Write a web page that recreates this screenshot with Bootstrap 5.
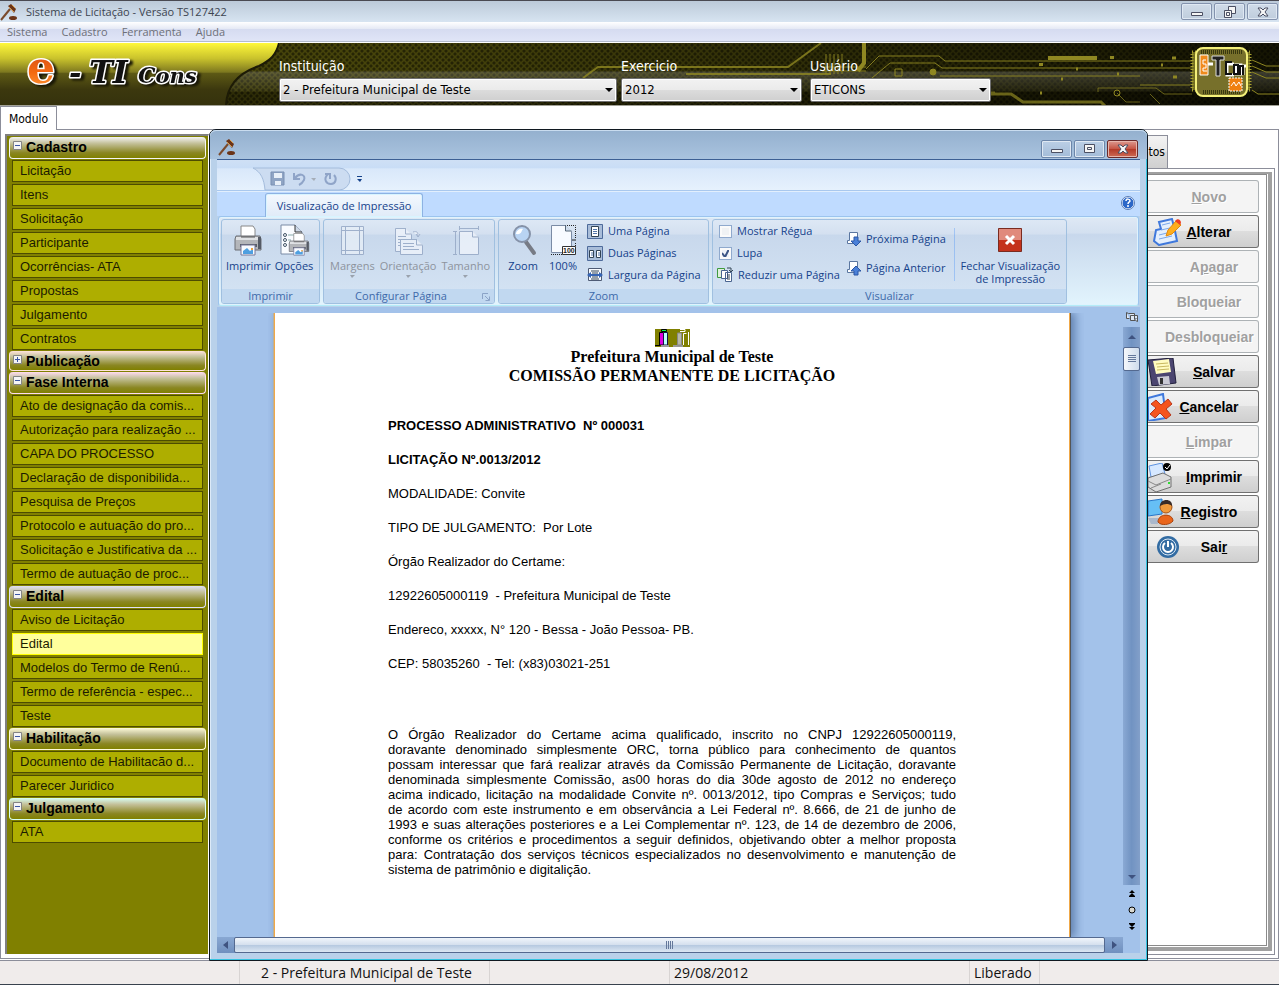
<!DOCTYPE html>
<html lang="pt-BR">
<head>
<meta charset="utf-8">
<meta name="viewport" content="width=device-width, initial-scale=1">
<title>Sistema de Licitação</title>
<link rel="stylesheet" href="https://cdn.jsdelivr.net/npm/bootstrap@5.3.0/dist/css/bootstrap.min.css">
<style>
:root{--ui:"Open Sans","Noto Sans",sans-serif;--tahoma:"DejaVu Sans Condensed","DejaVu Sans",sans-serif;--sans:"Liberation Sans",Arial,sans-serif}
body{font-family:var(--ui);font-size:11px;line-height:16px;color:#000;background:#fff}
button{font-family:inherit;padding:0;border:0;background:none;color:inherit}
svg{display:block;flex:none}
.app{min-height:100vh}
/* application frame */
.app-title{height:22px;border-top:1px solid #4a4a52;background:linear-gradient(#bccad9,#d7e4f1);padding:0 1px 0 0;color:#3c4450}
.win-btn{width:31px;height:17px;border:1px solid #8392ad;border-radius:2px;background:linear-gradient(#d0dbe8,#bfcddd);display:flex;align-items:center;justify-content:center;box-shadow:inset 0 0 0 1px #dfe8f3}
.win-btns{display:flex;gap:2px}
.app-menu{height:20px;background:linear-gradient(#fff,#e6eaf5 35%,#d5dbf0 36%,#e0e5f7);border-bottom:1px solid #b4bccd;gap:14px;padding-left:7px}
.app-menu a{color:#6e7078;text-decoration:none;line-height:20px}
/* banner */
.banner{height:63px;margin-top:1px;border-bottom:1px solid #a3a297;background:
 linear-gradient(rgba(0,0,0,0) 28px,rgba(150,150,140,.32) 29px,rgba(60,60,50,.22) 48px,rgba(0,0,0,.35) 49px),
 linear-gradient(90deg,rgba(0,0,0,0) 30%,rgba(0,0,0,.7) 100%),
 radial-gradient(circle at 2px 2px,#26250500 0,#262505 0,#262505 1px,transparent 2px) 0 0/6px 6px,
 radial-gradient(circle at 2px 2px,#262505 0,#262505 1px,transparent 2px) 3px 3px/6px 6px,#46440b}
.logo-text{filter:drop-shadow(3px 2px 1px #1a1806)}
.banner-field{z-index:1;padding-top:15px}
.banner-field label{color:#fff;font:14px/16px var(--tahoma);display:block}
.banner-field .form-select{font:13px/20px var(--tahoma);height:24px;padding:0 20px 0 3px;border:1px solid #707070;border-radius:2px;color:#000;box-shadow:inset 0 0 0 1px #fff;
 background:url("data:image/svg+xml,%3Csvg xmlns='http://www.w3.org/2000/svg' width='8' height='4'%3E%3Cpath d='M0 0h8L4 4z'/%3E%3C/svg%3E") no-repeat right 3px center/8px 4px,linear-gradient(#f2f2f2,#ebebeb 48%,#dcdcdc 50%,#cfcfcf)}
/* module tab and main area */
.module-tab{font:12px/22px var(--tahoma);width:57px;height:24px;border:1px solid #8c8e9a;border-bottom:0;background:#fff;position:relative;z-index:1}
.tab-strip{height:23px}
.main-area{border:1px solid #8c8e9a;border-right:0}
.side-wrap{width:208px;padding:4px 0 4px 4px}
.side-box{background:#808000;border:solid #808080;border-width:2px 0 0 2px;border-right:1px solid #fff;padding:1px 2px 0;min-width:0}
.side-head{height:22px;display:flex;width:100%;border:1px solid var(--edge,#fff);border-top:0;border-radius:4px;background:linear-gradient(var(--edge,#f4f4ec),#c4c19a 30%,#8a8622 75%,#808000);font:bold 14px/21px var(--sans);margin-bottom:1px;padding-left:3px;gap:4px}
.side-head svg{margin-top:4px}
.side-head.closed{height:20px;line-height:20px}
.side-list{list-style:none;margin:0 3px 1px;padding:0;display:flex;flex-direction:column;gap:2px}
.side-list a{display:block;height:22px;border:1px solid #4d4c00;background:#aeae00;font:13px/20px var(--sans);color:#1c1c00;text-decoration:none;padding-left:7px;white-space:nowrap;overflow:hidden}
.side-list a.active{background:#ffff9c;border-color:#ff0}
/* print preview window */
.preview{margin:-1px 0 -3px;border:1px solid #101820;border-radius:7px 7px 0 0;background:#b9d1ea;padding:0 7px 7px;box-shadow:inset -1px 0 #35c3e0,inset 0 -1px #35c3e0,inset 1px 0 #dceaf8;position:relative;z-index:2;min-width:0}
.preview-bar{height:29px;margin:0 -7px;padding:0 9px 0 8px;border-radius:6px 6px 0 0;background:linear-gradient(#94b0ce,#a9c3df);box-shadow:inset 0 1px #c9dcef}
.preview-bar .win-btn{height:18px;background:linear-gradient(#bccfe6,#a4bcd8);border-color:#6c86aa}
.preview-bar .win-btn.shut{background:linear-gradient(#dd9a90,#c65443 50%,#b43a28 52%,#cd6b55);border-color:#6b2a2a;box-shadow:inset 0 0 0 1px #e6b5ab}
.quick{height:32px;border-top:1px solid #3c5f94;background:linear-gradient(#cfe0f5,#c9ddf6 25%,#d9e8fa 30%,#e6f1fd);border-bottom:1px solid #a9c8ee;padding:7px 0 0 36px}
.ribbon-tabs{height:25px;background:#bfdbff;padding-left:48px;padding-right:5px;border-top:1px solid #e2effd}
.ribbon-tab{height:24px;margin-top:1px;width:158px;border:1px solid #8db2e3;border-bottom:0;border-radius:3px 3px 0 0;background:linear-gradient(#f3f8fe,#e0ebf8);box-shadow:inset 0 0 0 1px #d8f4ff;color:#15428b;line-height:21px;position:relative;z-index:1}
.ribbon{height:90px;border:1px solid #9cc4ee;border-radius:3px;margin:0 1px 1px;background:linear-gradient(#dfe9f5,#d3e0f0 18%,#c8d8ec 20%,#e2f4fd);border-bottom-color:#b4ecf8;box-shadow:inset 0 0 0 1px #dff3fd;padding:2px;gap:3px;color:#15428b}
.rgroup{border:1px solid #a0c0e0;border-radius:3px;height:85px;background:linear-gradient(#dde8f5,#d4e0f0 17%,#c8d8ec 18%,#d5e4f4);overflow:hidden}
.rgroup .caption-bar{height:14px;background:#c1d8f0;color:#3e6aaa;text-align:center;line-height:14px;position:relative}
.rbtn{display:flex;flex-direction:column;align-items:center;line-height:13px;gap:3px}
.rbtn:disabled{color:#8d939d}
.rbtn:disabled svg{opacity:.8}
.rbtn.wide-btn{gap:7px}
.setup-row{padding-left:6px;gap:5px}
.page-moves{padding-top:8px;gap:7px}
.rline{display:flex;align-items:center;gap:5px;height:22px;line-height:16px;white-space:nowrap}
.rline .form-check-input{width:13px;height:13px;margin:0 0 0 2px;border:1px solid #8fa9cd;border-radius:0;background-color:#f0f2f4;box-shadow:inset 0 0 0 2px #fafafa}
.rline .form-check-input:checked{background:#eef2f8 url("data:image/svg+xml,%3Csvg xmlns='http://www.w3.org/2000/svg' viewBox='0 0 11 11'%3E%3Cpath d='M2 5l3 4 4-8' fill='none' stroke='%233c5585' stroke-width='2'/%3E%3C/svg%3E") center/11px 11px no-repeat}
.desk{background:#a3c2ea}
.canvas{padding:6px 53px 0 57px}
.sheet{background:#fff;border:solid #f0a848;border-width:0 1px;box-shadow:1px 0 #555,-1px 0 #b8b0a0,4px 0 9px 1px #5f7fae;clip-path:inset(0 -14px 0 -6px);padding:15px 113px 0;font:13px/16px var(--sans)}
.sheet h1{font:bold 16px/19px "Liberation Serif",serif;margin:0;text-align:center}
.sheet .fields{padding-top:33px}
.sheet p{margin:0 0 18px;white-space:pre}
.sheet .terms{line-height:15px;margin-top:55px;white-space:normal}
.terms span{display:block;white-space:nowrap;text-align-last:justify}
.terms span:last-child{text-align-last:left}
.track{background:linear-gradient(90deg,#8aa9d4,#7193c2 50%,#829fc9)}
.hbar{height:16px;background:linear-gradient(#89a8d3,#7090be)}
.thumb{background:linear-gradient(#f0f5fb,#d5e0ee 48%,#b6c9e0 52%,#dce7f3);border:1px solid #54698f;border-radius:2px}
.vthumb{background:linear-gradient(90deg,#f4f7fb,#cfdcec);border:1px solid #54698f;border-radius:2px;height:24px}
/* right-hand command panel */
.cmd-wrap{width:131px;border-right:1px solid #8c8e9a;padding:5px 3px 3px 0}
.cmd-tab{width:20px;height:33px;border:1px solid #8c8e9a;border-width:1px 1px 0 0;background:linear-gradient(#f3f3f3,#e8e8e8 48%,#dcdcdc 50%,#d0d0d0);font:12px/33px var(--tahoma);text-align:right;padding-right:2px;display:block}
.cmd-page{border:1px solid #8c8e9a;border-left:0;padding:3px 2px 3px 0}
.cmd-box{border:solid #a0a0a0;border-width:2px 4px 4px 0;padding:0 1px 1px 0}
.cmd-in{border:1px solid #8a8a8a;border-left:0;padding-top:5px;gap:2px}
.cmd{height:33px;width:111px;border:1px solid #707070;border-left:0;border-radius:0 3px 3px 0;background:linear-gradient(#f2f2f2,#ebebeb 48%,#dddddd 50%,#cfcfcf);font:bold 14px/30px var(--sans);position:relative;overflow:hidden;white-space:nowrap;text-align:center;padding:1px 0 0 12px}
.cmd:disabled{background:#f4f4f4;border-color:#adb2b5;color:#a0a0a0;text-shadow:1px 1px #fff}
.cmd svg{position:absolute;left:0;top:2px}
.cmd .inset-ico{left:5px}
.cmd.shifted{padding-left:22px}
.cmd.spill{padding-left:17px;text-align:left}
/* status bar */
.status{height:25px;margin-top:1px;border-top:1px solid #8c8e9a;border-bottom:1px solid #39424e;background:#f0eceb;font-size:14px;line-height:24px;color:#111}
.status>div{border-right:1px solid #d8d4d3;padding-left:4px}
</style>
</head>
<body>
<svg width="0" height="0" class="position-absolute" aria-hidden="true">
<defs>
<symbol id="gavel" viewBox="0 0 18 18"><path d="M1 17L10 6" stroke="#7a4a2c" stroke-width="2"/><path d="M8 3l3-2 5 5-2 4z" fill="#6b3418"/><path d="M9 4l5 5M12 2l3 3" stroke="#d89a48" stroke-width="1"/><ellipse cx="13" cy="15" rx="4" ry="2" fill="#6b3418"/></symbol>
<symbol id="printer" viewBox="0 0 32 32"><path d="M9 2h12l2 3v8H9z" fill="#fff" stroke="#888"/><path d="M4 12h24l1 3v11H3V15z" fill="#b4b6ba" stroke="#6c6f75"/><path d="M4 13h24v3H4z" fill="#dfe1e4"/><path d="M9 13h14" stroke="#555"/><path d="M26 13h3v12h-3z" fill="#555b66"/><path d="M8 20h17v3H8z" fill="#5a6068"/><path d="M9 21h14v10H9z" fill="#f8fbff" stroke="#779"/><path d="M11 27l4-3 3 3 3-2v5H11z" fill="#4f9fe0"/><path d="M19 24h2v2h-2z" fill="#e8a040"/></symbol>
<symbol id="minus" viewBox="0 0 9 9"><path d="M.5.5h8v8h-8z" fill="#f4f4f4" stroke="#848484"/><path d="M2 4.500h5" stroke="#3a55a5"/></symbol>
<symbol id="plus" viewBox="0 0 9 9"><path d="M.5.5h8v8h-8z" fill="#f4f4f4" stroke="#848484"/><path d="M2 4.500h5M4.500 2v5" stroke="#3a55a5"/></symbol>
<symbol id="xmark" viewBox="0 0 12 10"><path d="M1 1h3l2 2 2-2h3L8 5l3 4H8L6 7 4 9H1l3-4z" fill="#f5f5f5" stroke="#4b4f63"/></symbol>
<symbol id="mini" viewBox="0 0 12 10"><path d="M.5 5.500h11v3H.5z" fill="#f5f5f5" stroke="#4b4f63"/></symbol>
</defs>
</svg>

<div class="app d-flex flex-column">
<header>
 <div class="app-title d-flex align-items-center">
  <svg width="18" height="18"><use href="#gavel"/></svg>
  <span class="ms-2 me-auto">Sistema de Licitação - Versão TS127422</span>
  <div class="win-btns">
   <button class="win-btn" aria-label="Minimizar"><svg width="12" height="10"><use href="#mini"/></svg></button>
   <button class="win-btn" aria-label="Restaurar"><svg width="12" height="12" viewBox="0 0 12 12" fill="#f5f5f5" stroke="#4b4f63"><path d="M4.500.5h7v7h-7z"/><path d="M.5 4.500h7v7h-7z"/><path d="M2.500 6.500h3v3h-3z"/></svg></button>
   <button class="win-btn" aria-label="Fechar"><svg width="12" height="10"><use href="#xmark"/></svg></button>
  </div>
 </div>
 <nav class="app-menu d-flex" aria-label="Menu"><a href="#">Sistema</a><a href="#">Cadastro</a><a href="#">Ferramenta</a><a href="#">Ajuda</a></nav>
 <div class="banner d-flex position-relative overflow-hidden">
  <svg width="279" height="62" viewBox="0 0 279 62" role="img" aria-label="e-TICons">
   <defs><linearGradient id="yl" x2="0" y2="1"><stop stop-color="#fff83a"/><stop offset=".25" stop-color="#c9c22c"/><stop offset=".47" stop-color="#7d781f"/><stop offset=".49" stop-color="#5d5915"/><stop offset=".75" stop-color="#3c380e"/><stop offset="1" stop-color="#35320d"/></linearGradient>
   <linearGradient id="or" x2="0" y2="1"><stop stop-color="#c8401c"/><stop offset=".6" stop-color="#f46a10"/><stop offset="1" stop-color="#ffa040"/></linearGradient></defs>
   <path d="M0 0h279c-3 12-8 17-20 23-18 6-32 18-33 39H0z" fill="url(#yl)"/>
   <path d="M279 0c-3 12-8 17-20 23-18 6-32 18-33 39" fill="none" stroke="#1d1b06" stroke-width="2"/>
   <g class="logo-text" font-family="DejaVu Serif, serif" font-weight="bold" font-style="italic" paint-order="stroke" stroke-linejoin="round" stroke="#fff" stroke-width="3">
    <text x="27" y="40" font-size="44" font-style="normal" fill="url(#or)">e</text>
    <text x="69" y="40" font-size="30" fill="#111">-</text><text x="89" y="40" font-size="32" fill="#111">TI</text><text x="138" y="40" font-size="22" fill="#111">C<tspan font-size="21">ons</tspan></text>
   </g>
  </svg>
  <svg class="position-absolute end-0 top-0" width="700" height="62" viewBox="579 43 700 62" fill="none" stroke="#8f8722" aria-hidden="true">
   <path d="M583 78l15-11h190l33-24M686 74h145" stroke-width="2" opacity=".8"/>
   <path d="M826 54v20M830 54v20M834 54v20M838 54v20M842 54v20M822 67h44M822 71h44" opacity=".9"/>
   <path d="M864 43v20l-6 8" stroke-width="4"/>
   <path d="M866 69l13-13h60l6 5h250M872 78l18-15h45l7 5h250M940 76h200M1140 85h50" stroke-width="1" opacity=".9"/>
   <path d="M991 94h20l12 8h78l6 6M880 93h115" stroke-width="3" opacity=".7"/>
   <path d="M1098 92v-4h58l8 6h28M1117 93l9 9h14M1150 94l10 10" opacity=".7"/><circle cx="1117" cy="93" r="3"/>
   <path d="M1252 60l14 6h13M1252 66l14 6h13M1252 72l14 6h13M1252 90l6 4h21"/>
   <path d="M895 69h7v7h-7z"/><circle cx="933" cy="72" r="3" fill="#8f8722"/><path d="M1048 56h49v4h-49zM1110 56h4v3h-4zM1039 63h4v3h-4z" fill="#8f8722" stroke="none"/>
   <path d="M1076 69h2M1117 74h2M1061 79h2M1040 93h2M1161 65h2M1172 58h4M1173 77h4" stroke-width="3"/>
   <path d="M1192 52h58v38h-58z" fill="#706c20" stroke="#a8a030" stroke-dasharray="1 2" stroke-width="3"/>
   <rect x="1196" y="48" width="51" height="48" rx="7" fill="#77702b" stroke="#f4f07a" stroke-width="2"/>
   <path d="M1201 52h42M1203 92h38" stroke="#38380f" stroke-width="4" stroke-dasharray="1 1"/>
   <path d="M1200 55h8v20h-8z" fill="#f08a1c" stroke="#fff"/><path d="M1206 60h-3v4h3v4h-3v3h4" stroke="#fff"/>
   <path d="M1208 64h5" stroke="#fff" stroke-width="3"/><path d="M1212 56h12v4h-4v16h-4V60h-4z" fill="#222" stroke="#ddd"/>
   <path d="M1234 64h-7v11h7M1236 65h5v9h-5zM1243 75v-9M1246 66h-3" stroke="#fff" stroke-width="3"/><path d="M1232 62h-6v12h6M1234 65h4v9h-4zM1240 75v-9h3v9" stroke="#111" stroke-width="2"/>
   <path d="M1229 78h13v13h-13z" fill="#ef8010" stroke="#fff" stroke-dasharray="2 1"/><path d="M1231 86l3-4 2 4 3-4 2 4" stroke="#fff"/>
  </svg>
  <div class="banner-field" style="width:338px"><label for="inst">Instituição</label><select id="inst" class="form-select mt-1"><option>2 - Prefeitura Municipal de Teste</option></select></div>
  <div class="banner-field ms-1" style="width:181px"><label for="exer">Exercicio</label><select id="exer" class="form-select mt-1"><option>2012</option></select></div>
  <div class="banner-field ms-2" style="width:181px"><label for="usu">Usuário</label><select id="usu" class="form-select mt-1"><option>ETICONS</option></select></div>
 </div>
</header>

<div class="tab-strip"><button class="module-tab">Modulo</button></div>

<main class="main-area d-flex flex-grow-1">
 <aside class="side-wrap d-flex flex-shrink-0">
  <nav class="side-box flex-grow-1" aria-label="Modulo">
   <button class="side-head" style="--edge:#f4f4f4"><svg width="9" height="9"><use href="#minus"/></svg>Cadastro</button>
   <ul class="side-list"><li><a href="#">Licitação</a></li><li><a href="#">Itens</a></li><li><a href="#">Solicitação</a></li><li><a href="#">Participante</a></li><li><a href="#">Ocorrências- ATA</a></li><li><a href="#">Propostas</a></li><li><a href="#">Julgamento</a></li><li><a href="#">Contratos</a></li></ul>
   <button class="side-head closed" style="--edge:#ffe4dc"><svg width="9" height="9"><use href="#plus"/></svg>Publicação</button>
   <button class="side-head" style="--edge:#ffdcf0"><svg width="9" height="9"><use href="#minus"/></svg>Fase Interna</button>
   <ul class="side-list"><li><a href="#">Ato de designação da comis...</a></li><li><a href="#">Autorização para realização ...</a></li><li><a href="#">CAPA DO PROCESSO</a></li><li><a href="#">Declaração de disponibilida...</a></li><li><a href="#">Pesquisa de Preços</a></li><li><a href="#">Protocolo e autuação do pro...</a></li><li><a href="#">Solicitação e Justificativa da ...</a></li><li><a href="#">Termo de autuação de proc...</a></li></ul>
   <button class="side-head" style="--edge:#e0e0f8"><svg width="9" height="9"><use href="#minus"/></svg>Edital</button>
   <ul class="side-list"><li><a href="#">Aviso de Licitação</a></li><li><a href="#" class="active">Edital</a></li><li><a href="#">Modelos do Termo de Renú...</a></li><li><a href="#">Termo de referência - espec...</a></li><li><a href="#">Teste</a></li></ul>
   <button class="side-head" style="--edge:#fffbd8"><svg width="9" height="9"><use href="#minus"/></svg>Habilitação</button>
   <ul class="side-list"><li><a href="#">Documento de Habilitacão d...</a></li><li><a href="#">Parecer Juridico</a></li></ul>
   <button class="side-head" style="--edge:#d8fff4"><svg width="9" height="9"><use href="#minus"/></svg>Julgamento</button>
   <ul class="side-list"><li><a href="#">ATA</a></li></ul>
  </nav>
 </aside>

 <section class="preview d-flex flex-column flex-grow-1" aria-label="Visualização de Impressão">
  <div class="preview-bar d-flex align-items-center">
   <svg class="me-auto mt-1" width="18" height="18"><use href="#gavel"/></svg>
   <div class="win-btns mt-2">
    <button class="win-btn" aria-label="Minimizar"><svg width="12" height="10"><use href="#mini"/></svg></button>
    <button class="win-btn" aria-label="Maximizar"><svg width="11" height="9" viewBox="0 0 11 9" fill="#f5f5f5" stroke="#4b4f63"><path d="M.5.5h10v8H.5zM3.500 3.500h4v2h-4z"/></svg></button>
    <button class="win-btn shut" aria-label="Fechar"><svg width="12" height="10"><use href="#xmark"/></svg></button>
   </div>
  </div>
  <div class="quick d-flex">
   <svg width="112" height="24" viewBox="0 0 112 24" aria-hidden="true"><path d="M0 1h86a11 11 0 0 1 0 22H12C11 12 8 5 0 1z" fill="#ccdcf1" stroke="#a4bcdc"/>
    <path d="M18 5h13v13H18z" fill="#8fa4c4" stroke="#7b90b3"/><path d="M21 6h8v5h-8zM22 14h6v4h-6z" fill="#e8eff8"/>
    <path d="M41 6v6h6M42 11c5-6 11-3 9 2-1 2-3 4-5 5" fill="none" stroke="#8fa4c8" stroke-width="2"/><path d="M58 11h5l-2 3z" fill="#a5adb8"/>
    <path d="M75 7c-5 5-2 10 3 10s6-6 3-9M72 7h5v5" fill="none" stroke="#8fa4c8" stroke-width="2"/>
    <path d="M104 9h5v1h-5zM104 12h5l-2 3z" fill="#15428b"/></svg>
  </div>
  <div class="ribbon-tabs d-flex justify-content-between align-items-start">
   <button class="ribbon-tab">Visualização de Impressão</button>
   <button class="mt-1" aria-label="Ajuda"><svg width="14" height="14" viewBox="0 0 14 14"><circle cx="7" cy="7" r="6" fill="#2b67c8" stroke="#fff"/><circle cx="7" cy="7" r="6.500" fill="none" stroke="#5a7db5"/><path d="M5 5c0-3 4-2 4 0 0 1-2 1-2 3M7 9v2" fill="none" stroke="#fff" stroke-width="1.500"/></svg></button>
  </div>
  <div class="ribbon d-flex">
   <div class="rgroup d-flex flex-column" style="width:99px">
    <div class="d-flex flex-grow-1 pt-1 ps-1 gap-1">
     <button class="rbtn"><svg width="32" height="32"><use href="#printer"/></svg>Imprimir</button>
     <button class="rbtn"><svg width="32" height="32" viewBox="0 0 32 32"><path d="M3 1h14l7 7v22H3z" fill="#fafcff" stroke="#7a8ba5"/><path d="M17 1v7h7" fill="#cdd8e6" stroke="#333"/><circle cx="7" cy="11" r="1.500" fill="none" stroke="#456"/><circle cx="7" cy="16" r="1.500" fill="none" stroke="#456"/><circle cx="7" cy="21" r="1.500" fill="none" stroke="#456"/><path d="M10 11h8M10 16h3" stroke="#8aa"/><svg x="9" y="8" width="24" height="24"><use href="#printer"/></svg></svg>Opções</button>
    </div><div class="caption-bar">Imprimir</div>
   </div>
   <div class="rgroup d-flex flex-column" style="width:172px">
    <div class="setup-row d-flex flex-grow-1 pt-1">
     <button class="rbtn" disabled><svg width="32" height="32" viewBox="0 0 32 32" fill="#e6eef7" stroke="#92a4c2"><path d="M5.500 2.500h22v28h-22z"/><path d="M9.500 2v28M23.500 2v28M5 6.500h22M5 26.500h22"/></svg>Margens<svg width="5" height="3" viewBox="0 0 5 3"><path d="M0 0h5L2 3z" fill="#8d939d"/></svg></button>
     <button class="rbtn" disabled><svg width="32" height="32" viewBox="0 0 32 32" fill="#eef3fa" stroke="#92a4c2"><path d="M3.500 4.500h10l6 6v17h-16z"/><path d="M13.500 4v6h6M6 12.500h8M6 15.500h3M6 18.500h3M6 21.500h3"/><path d="M8.500 15.500h16l6 6v9h-22z"/><path d="M24.500 15v6h6M11 19.500h11M11 22.500h11M11 25.500h16M21 8c4-1 5 0 5 4m-2-2l2 3 2-3" /></svg>Orientação<svg width="5" height="3" viewBox="0 0 5 3"><path d="M0 0h5L2 3z" fill="#8d939d"/></svg></button>
     <button class="rbtn" disabled><svg width="32" height="32" viewBox="0 0 32 32" fill="#eef3fa" stroke="#92a4c2"><path d="M9.500 7.500h13l6 6v17h-19z"/><path d="M22.500 7v6h6M9 4.500h19M9.500 2v4M28.500 2v4M5.500 7v23M3 7.500h4M3 30.500h4"/></svg>Tamanho<svg width="5" height="3" viewBox="0 0 5 3"><path d="M0 0h5L2 3z" fill="#8d939d"/></svg></button>
    </div><div class="caption-bar"><span class="pe-3">Configurar Página</span><svg class="position-absolute end-0 top-0 mt-1 me-1" width="8" height="8" viewBox="0 0 8 8" fill="none" stroke="#8ba3c7"><path d="M6 .5H.5V6M3 3l4 4M7.500 3.500v4h-4"/></svg></div>
   </div>
   <div class="rgroup d-flex flex-column" style="width:211px">
    <div class="d-flex flex-grow-1 ps-2 gap-2">
     <button class="rbtn pt-1 justify-content-start"><svg width="32" height="32" viewBox="0 0 32 32"><path d="M19 18l8 11" stroke="#777b85" stroke-width="4" stroke-linecap="round"/><circle cx="15" cy="10" r="8" fill="#b9d4f3" stroke="#8592a8" stroke-width="2"/><path d="M9 10c0-4 5-6 7-5-2 2-1 6-7 5z" fill="#fff"/></svg>Zoom</button>
     <button class="rbtn pt-1 justify-content-start"><svg width="32" height="32" viewBox="0 0 32 32"><path d="M18 1.500h10.500v13M28.500 19v11M27 30.500H4" fill="none" stroke="#222" stroke-dasharray="1 1"/><path d="M4.500 1.500h14l6 6v21h-20z" fill="#f8fbff" stroke="#7a8ba5"/><path d="M18.500 1v6h6" fill="#cfdcec" stroke="#567"/><path d="M25 16h4" stroke="#222"/><path d="M15.500 22.500h13v8h-13z" fill="#fff" stroke="#333"/><text x="16" y="29" font-size="7" font-family="Liberation Sans" font-weight="bold" fill="#222">100</text></svg>100%</button>
     <div>
      <button class="rline"><svg width="16" height="15" viewBox="0 0 16 15"><path d="M.5.5h15v14H.5z" fill="#a9bdd9" stroke="#4e6b9b"/><path d="M4.500 2.500h7v10h-7z" fill="#fff" stroke="#345"/><path d="M6 5.500h4M6 7.500h4M6 9.500h4" stroke="#57a"/></svg>Uma Página</button>
      <button class="rline"><svg width="16" height="15" viewBox="0 0 16 15"><path d="M.5.5h15v14H.5z" fill="#a9bdd9" stroke="#4e6b9b"/><path d="M2.500 4.500h4v7h-4zM9.500 4.500h4v7h-4z" fill="#fff" stroke="#345"/><path d="M4 7h2M4 9h2M11 7h2M11 9h2" stroke="#57a"/></svg>Duas Páginas</button>
      <button class="rline"><svg width="16" height="15" viewBox="0 0 16 15"><path d="M1.500.5h13v12h-13z" fill="#f8fbff" stroke="#4e5b75"/><path d="M4 3h8M5 5h6M5 9h6M4 11h8" stroke="#345"/><path d="M0 7l4-3v2h8V4l4 3-4 3V8H4v2z" fill="#3665b4"/></svg>Largura da Página</button>
     </div>
    </div><div class="caption-bar">Zoom</div>
   </div>
   <div class="rgroup d-flex flex-column" style="width:355px">
    <div class="d-flex flex-grow-1 ps-1">
     <div style="width:129px" class="flex-shrink-0">
      <label class="rline"><input type="checkbox" class="form-check-input">Mostrar Régua</label>
      <label class="rline"><input type="checkbox" class="form-check-input" checked>Lupa</label>
      <button class="rline"><svg width="16" height="16" viewBox="0 0 16 16"><path d="M.5 1.500h7v9h-7z" fill="#dff0dc" stroke="#3f9a3f"/><path d="M4.500 3.500h6v8h-6zM8.500 5.500h6v9h-6z" fill="#fff" stroke="#4a6590"/><path d="M10 8h3M10 10h3M10 12h3M10 1h4v3m-2-1l2 2 2-2" fill="none" stroke="#345"/></svg>Reduzir uma Página</button>
     </div>
     <div class="page-moves d-flex flex-column">
      <button class="rline"><svg width="15" height="16" viewBox="0 0 15 16"><path d="M3.500 1.500h8v11h-10v-3h2z" fill="#fff" stroke="#5a76a0"/><path d="M8 6h4v4h3l-5 5-5-5h3z" fill="#4a80d8" stroke="#2a56a5"/></svg>Próxima Página</button>
      <button class="rline"><svg width="15" height="16" viewBox="0 0 15 16"><path d="M3.500 1.500h8v11h-10v-3h2z" fill="#fff" stroke="#5a76a0"/><path d="M8 15h4v-4h3l-5-5-5 5h3z" fill="#4a80d8" stroke="#2a56a5"/></svg>Página Anterior</button>
     </div>
     <div class="vr my-2 ms-2 text-primary"></div>
     <button class="rbtn wide-btn flex-grow-1 pt-2"><svg width="24" height="24" viewBox="0 0 24 24"><path d="M.5.5h23v23H.5z" fill="#c4321c" stroke="#7a2b20"/><path d="M1 1h22v11H1z" fill="#e08a7c"/><path d="M8 8l8 8M16 8l-8 8" stroke="#fff" stroke-width="3"/></svg><span>Fechar Visualização<br>de Impressão</span></button>
    </div><div class="caption-bar">Visualizar</div>
   </div>
  </div>

  <div class="desk d-flex flex-grow-1">
   <div class="d-flex flex-column flex-grow-1">
    <div class="canvas d-flex flex-grow-1">
     <article class="sheet flex-grow-1">
      <svg class="mx-auto" width="35" height="19" viewBox="0 0 35 19"><path d="M0 1h35v18H0z" fill="#808000"/><path d="M6.500 1.500h5v2h-5z" fill="#0f4" stroke="#000"/><path d="M4.500 17V4.500h4V17z" fill="#d0d" stroke="#000"/><path d="M8.500 4.500h4V17h-4z" fill="#bff" stroke="#114"/><path d="M0 17.500h5M12 17.500h2" stroke="#000"/><path d="M6 18h8M18 18h10" stroke="#999" stroke-width="2"/><path d="M22.500 5v12h4V5z" fill="#b8b8a8" stroke="#888"/><path d="M25 1.500h5v2h-5M28.500 17V5.500h3M33.500 4v13" stroke="#fff" fill="none"/></svg>
      <h1>Prefeitura Municipal de Teste<br>COMISSÃO PERMANENTE DE LICITAÇÃO</h1>
      <div class="fields">
      <p class="fw-bold">PROCESSO ADMINISTRATIVO  Nº 000031</p>
      <p class="fw-bold">LICITAÇÃO Nº.0013/2012</p>
      <p>MODALIDADE: Convite</p>
      <p>TIPO DE JULGAMENTO:  Por Lote</p>
      <p>Órgão Realizador do Certame:</p>
      <p>12922605000119  - Prefeitura Municipal de Teste</p>
      <p>Endereco, xxxxx, N° 120 - Bessa - João Pessoa- PB.</p>
      <p>CEP: 58035260  - Tel: (x83)03021-251</p>
      </div>
      <p class="terms"><span>O Órgão Realizador do Certame acima qualificado, inscrito no CNPJ 12922605000119,</span><span>doravante denominado simplesmente ORC, torna público para conhecimento de quantos</span><span>possam interessar que fará realizar através da Comissão Permanente de Licitação, doravante</span><span>denominada simplesmente Comissão, as00 horas do dia 30de agosto de 2012 no endereço</span><span>acima indicado, licitação na modalidade Convite nº. 0013/2012, tipo Compras e Serviços; tudo</span><span>de acordo com este instrumento e em observância a Lei Federal nº. 8.666, de 21 de junho de</span><span>1993 e suas alterações posteriores e a Lei Complementar nº. 123, de 14 de dezembro de 2006,</span><span>conforme os critérios e procedimentos a seguir definidos, objetivando obter a melhor proposta</span><span>para: Contratação dos serviços técnicos especializados no desenvolvimento e manutenção de</span><span>sistema de patrimônio e digitalição.</span></p>
     </article>
    </div>
    <div class="hbar d-flex align-items-stretch">
     <svg width="17" height="16" viewBox="0 0 17 16"><path d="M11 4v8L6 8z" fill="#3f5380"/></svg>
     <div class="thumb flex-grow-1 d-flex align-items-center justify-content-center"><svg width="8" height="8" viewBox="0 0 8 8"><path d="M.5 0v8M2.500 0v8M4.500 0v8M6.500 0v8" stroke="#64789b"/></svg></div>
     <svg width="18" height="16" viewBox="0 0 18 16"><path d="M7 4v8l5-4z" fill="#3f5380"/></svg>
    </div>
   </div>
   <div class="d-flex flex-column ms-auto" style="width:17px">
    <svg class="mx-auto my-1" width="12" height="12" viewBox="0 0 12 12" fill="#dfe8f5" stroke="#555"><path d="M.5 1.500l2 1h6v6l2-1M.5 1.500v6h3M4.500 4.500h7v6l-2-1h-5z"/></svg>
    <div class="track flex-grow-1 d-flex flex-column">
     <svg class="mx-auto my-1" width="8" height="12" viewBox="0 0 8 12"><path d="M0 8h8L4 4z" fill="#3f5380"/></svg>
     <div class="vthumb d-flex align-items-center justify-content-center"><svg width="8" height="8" viewBox="0 0 8 8"><path d="M0 .5h8M0 2.500h8M0 4.500h8M0 6.500h8" stroke="#64789b"/></svg></div>
     <svg class="mx-auto mt-auto mb-1" width="8" height="8" viewBox="0 0 8 8"><path d="M0 2h8L4 6z" fill="#3f5380"/></svg>
    </div>
    <svg class="me-auto ms-1" width="9" height="68" viewBox="0 0 9 68"><path d="M2 8l3-3 3 3zM2 11l3-3 3 3zM2 11h6v1H2zM2 38h6v1H2zM2 39l3 3 3-3zM2 42l3 3 3-3z"/><circle cx="5" cy="25" r="3" fill="#d8d8d0" stroke="#000"/></svg>
   </div>
  </div>
 </section>

 <aside class="cmd-wrap d-flex flex-column flex-shrink-0">
  <button class="cmd-tab overflow-hidden"><span class="float-end">tos</span></button>
  <div class="cmd-page d-flex flex-grow-1">
   <div class="cmd-box d-flex flex-grow-1">
    <div class="cmd-in flex-grow-1 d-flex flex-column">
     <button class="cmd" disabled><u>N</u>ovo</button>
     <button class="cmd"><svg class="inset-ico" width="30" height="28" viewBox="0 0 30 28"><path d="M6 4l13-3 3 12 2 10-18 4-5-4 2-11 5-1z" fill="#e4effd" stroke="#3f78dc" stroke-width="2"/><path d="M8 12l9-2M6 17l12-3M6 21l13-3M9 7l8-2" stroke="#7aa7ea"/><path d="M13 18l2-6 8-9 5 4-9 9z" fill="#ffae1e" stroke="#e08a10"/><path d="M22 3c3-4 8 0 5 4z" fill="#ef3e23"/></svg><u>A</u>lterar</button>
     <button class="cmd shifted" disabled>A<u>p</u>agar</button>
     <button class="cmd" disabled>Bloqueiar</button>
     <button class="cmd spill" disabled>Desbloqueiar</button>
     <button class="cmd shifted"><svg width="30" height="28" viewBox="0 0 30 28"><path d="M0 2l25-2 3 25-24 3z" fill="#4b4570" stroke="#211f3c"/><path d="M5 3l16-2 2 13-15 2z" fill="#fffbc0"/><path d="M8 6l12-1M9 9l12-1M9 12l12-1" stroke="#c8b860"/><path d="M9 19l12-1 1 8-11 1z" fill="#c9c9d4"/><path d="M12 20h3v6h-3z" fill="#333"/></svg><u>S</u>alvar</button>
     <button class="cmd"><svg width="26" height="28" viewBox="0 0 26 28"><path d="M0 5l15-4 3 24-18 3z" fill="#dcebfc" stroke="#3f78dc" stroke-width="2"/><path d="M3 11l5-4 5 5 7-6 4 5-6 5 5 6-5 4-6-6-5 5-5-4 6-6z" fill="#f5541e" stroke="#b8371c"/></svg><u>C</u>ancelar</button>
     <button class="cmd" disabled><u>L</u>impar</button>
     <button class="cmd shifted"><svg width="26" height="29" viewBox="0 0 26 29"><path d="M1 3l13-3 3 11-14 3z" fill="#d6e8ff" stroke="#5d92e0"/><path d="M0 15l15-5 8 4v10l-15 5-8-5z" fill="#dcdcdc" stroke="#707070"/><path d="M0 18l8 4 15-6M3 25l10-4" stroke="#888" fill="none"/><path d="M20 19h2v2h-2z" fill="#3d3"/><circle cx="19" cy="4" r="4"/><path d="M17 4l2 2 3-4" stroke="#fff" fill="none"/></svg><u>I</u>mprimir</button>
     <button class="cmd"><svg width="26" height="28" viewBox="0 0 26 28"><path d="M0 3l14-2v15L0 18z" fill="#66bff5" stroke="#2875c8"/><path d="M0 20h10v6H3z" fill="#aab8cc"/><circle cx="18" cy="9" r="6" fill="#f09a3c" stroke="#a55418"/><path d="M12 8c0-8 13-8 12 0-4-3-8-2-12 0z" fill="#3a2c28"/><path d="M10 24c0-9 15-9 15-1-3 4-12 5-15 1z" fill="#e9651b" stroke="#a94410"/></svg><u>R</u>egistro</button>
     <button class="cmd shifted"><svg class="ms-2" width="24" height="28" viewBox="0 0 24 28"><circle cx="12" cy="14" r="11" fill="#336ca3"/><circle cx="12" cy="14" r="8" fill="none" stroke="#dce9f5"/><path d="M9 10a5 5 0 1 0 6 0M12 8v6" fill="none" stroke="#fff" stroke-width="2"/></svg>Sai<u>r</u></button>
    </div>
   </div>
  </div>
 </aside>
</main>

<footer class="status d-flex">
 <div style="width:240px"></div><div class="text-center" style="width:250px">2 - Prefeitura Municipal de Teste</div><div style="width:180px"></div><div style="width:300px">29/08/2012</div><div style="width:70px">Liberado</div>
</footer>
</div>
<script src="https://cdn.jsdelivr.net/npm/bootstrap@5.3.0/dist/js/bootstrap.bundle.min.js"></script>
</body>
</html>
